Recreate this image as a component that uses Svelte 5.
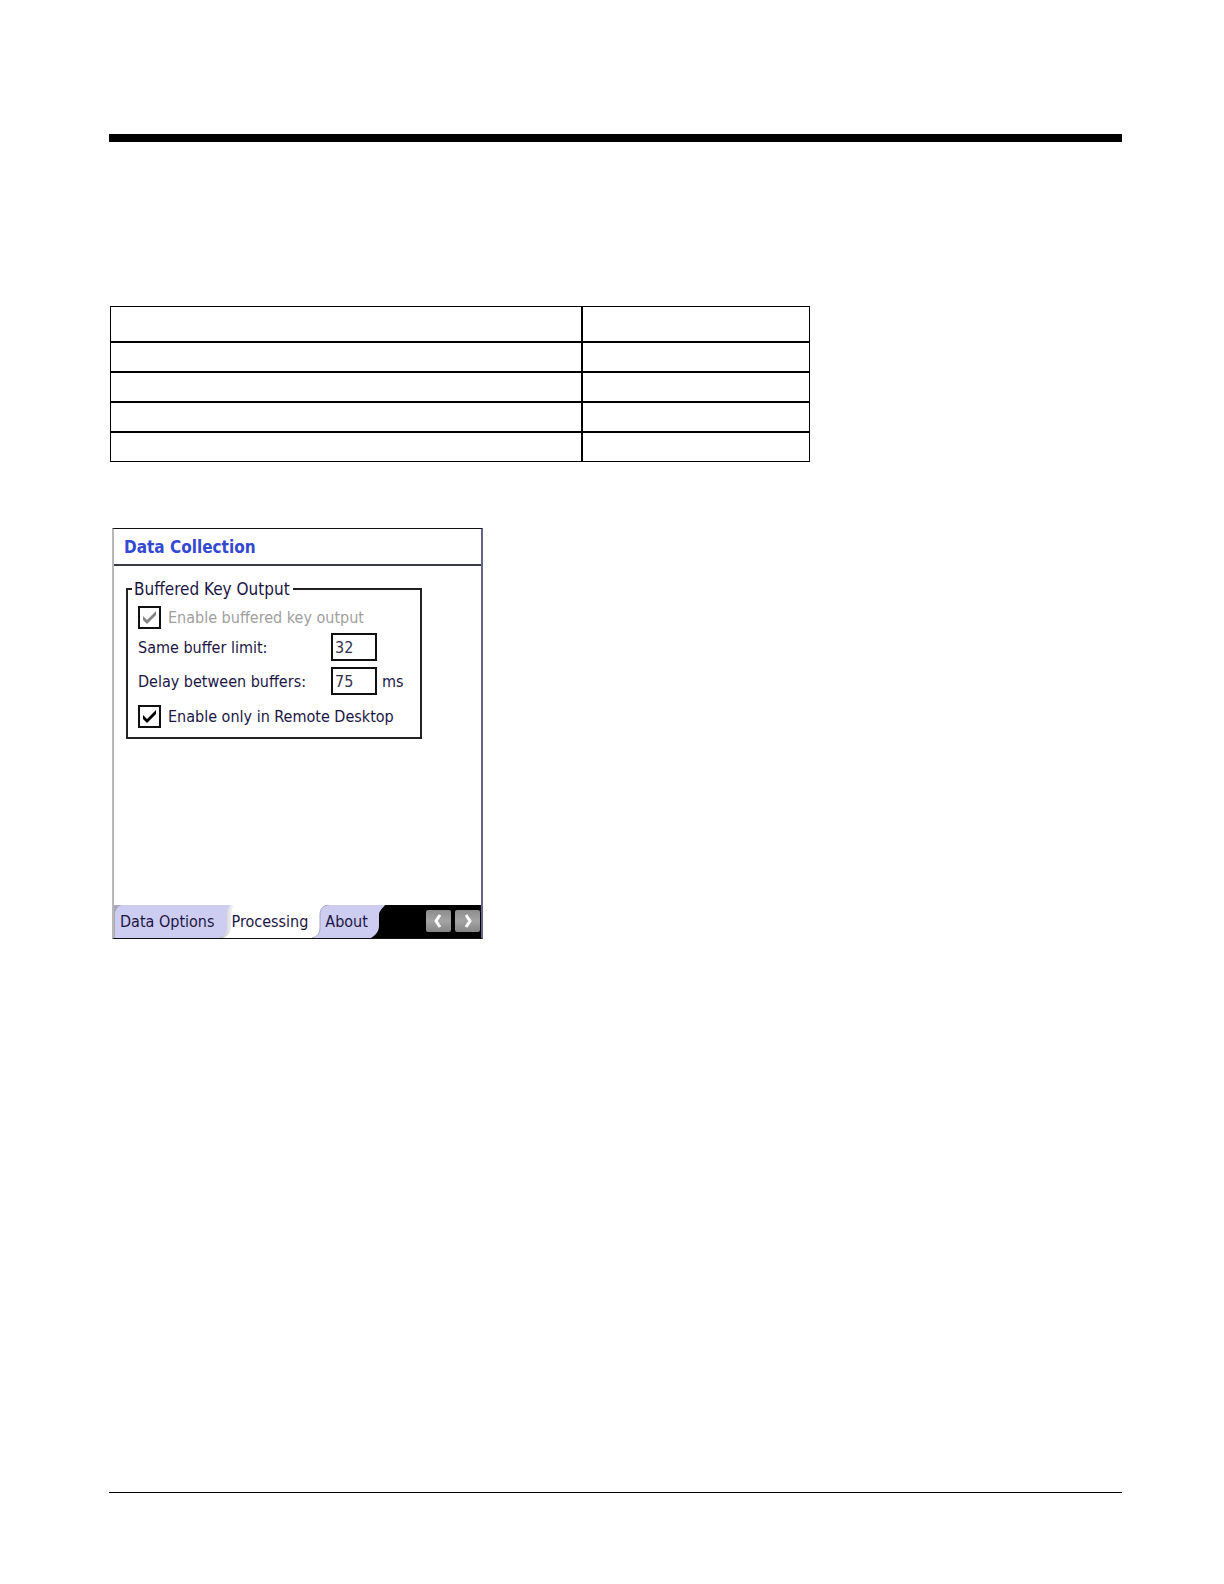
<script lang="ts">
    let bufferLimit = '32';
    let bufferDelay = '75';
    let enableOutput = true;
    let remoteOnly = true;
    let activeTab = 'Processing';

    const tabs = ['Data Options', 'Processing', 'About'];
    const rows = [0, 1, 2, 3];

    function step(direction) {
        const next = tabs.indexOf(activeTab) + direction;
        if (next >= 0 && next < tabs.length) {
            activeTab = tabs[next];
        }
    }
</script>

<div class="page">
    <div class="top-rule"></div>

    <table>
        <thead>
            <tr>
                <th class="wide"></th>
                <th></th>
            </tr>
        </thead>
        <tbody>
            {#each rows as row}
                <tr>
                    <td></td>
                    <td></td>
                </tr>
            {/each}
        </tbody>
    </table>

    <section class="device">
        <h1>Data Collection</h1>
        <div class="panel">
            <fieldset>
                <legend>Buffered Key Output</legend>
                <label class="check disabled">
                    <input type="checkbox" bind:checked={enableOutput} disabled />
                    <svg viewBox="0 0 23 23" aria-hidden="true">
                        <path d="M5 10v4l4 4 9-9V5l-9 9z" />
                    </svg>
                    Enable buffered key output
                </label>
                <div class="fields">
                    <label for="limit">Same buffer limit:</label>
                    <input id="limit" type="text" bind:value={bufferLimit} />
                    <span></span>
                    <label for="delay">Delay between buffers:</label>
                    <input id="delay" type="text" bind:value={bufferDelay} />
                    <span>ms</span>
                </div>
                <label class="check">
                    <input type="checkbox" bind:checked={remoteOnly} />
                    <svg viewBox="0 0 23 23" aria-hidden="true">
                        <path d="M5 10v4l4 4 9-9V5l-9 9z" />
                    </svg>
                    Enable only in Remote Desktop
                </label>
            </fieldset>
        </div>
        <nav class="tab-bar">
            <svg class="tab-shapes" viewBox="0 0 367 33" preserveAspectRatio="none" aria-hidden="true">
                <defs>
                    <linearGradient id="fold" x1="0" x2="1" y1="0" y2="0">
                        <stop offset="0" stop-color="#b4b4bc" />
                        <stop offset="1" stop-color="#fff" />
                    </linearGradient>
                </defs>
                <path fill="#fff" d="M0 0h300v33H0z" />
                <path fill="url(#fold)" d="M112 0h9l-3 4-1 18c0 5-3 9-8 11h-5z" />
                <path fill="#cdcdf1" d="M0 0h117c-3 2-4 5-4 9v13c0 5-4 10-9 11H0z" />
                <path fill="#a9a9bb" d="M0 0h8C4 1 2 4 1 8v25H0z" />
                <path fill="#cdcdf1" d="M198 33c5-1 8-5 8-10V10c0-6 3-10 9-10h60v33z" />
                <path fill="none" stroke="#a6a6bd" d="M198 33c5-1 8-5 8-10V10c0-6 3-10 9-10" />
                <path fill="#000" d="M271 0h96v33H257c5-3 8-7 8-12V10c0-4 3-6 6-10z" />
            </svg>
            {#each tabs as tab}
                <button class="tab" on:click={() => (activeTab = tab)}>{tab}</button>
            {/each}
            <div class="arrows">
                <button class="arrow" aria-label="Previous tab" on:click={() => step(-1)}>
                    <svg viewBox="0 0 25 22" aria-hidden="true">
                        <path d="M14 5l-4 6 4 6" />
                    </svg>
                </button>
                <button class="arrow" aria-label="Next tab" on:click={() => step(1)}>
                    <svg viewBox="0 0 25 22" aria-hidden="true">
                        <path d="M11 5l4 6-4 6" />
                    </svg>
                </button>
            </div>
        </nav>
    </section>

    <footer></footer>
</div>

<style>
    :global(body) {
        background: #fff;
    }

    .page {
        display: flex;
        flex-direction: column;
        align-items: flex-start;
        box-sizing: border-box;
        min-height: 100vh;
        padding: 134px 102px 91px 109px;
        font-family: 'DejaVu Sans Condensed', 'Noto Sans', sans-serif;
        font-size: 16px;
        color: #1b1644;
    }

    .top-rule {
        width: 100%;
        height: 8px;
        background: #000;
    }

    table {
        width: 700px;
        max-width: 100%;
        margin: 164px 0 66px 1px;
        border: none;
        border-spacing: 0;
        table-layout: fixed;
    }

    th,
    td {
        box-sizing: border-box;
        height: 30px;
        padding: 0;
        border: 1px solid #000;
    }

    th {
        height: 36px;
    }

    .wide {
        width: 472px;
    }

    .device {
        box-sizing: border-box;
        width: 371px;
        max-width: 100%;
        margin-left: 3px;
        border: 1px solid #111;
        border-left: 2px solid #b8b8b8;
        border-right: 2px solid #626784;
    }

    h1 {
        margin: 0;
        padding: 1px 0 0 10px;
        border-bottom: 2px solid #3a3c44;
        font-size: 17px;
        line-height: 34px;
        color: #3349d2;
    }

    .panel {
        min-height: 339px;
        box-sizing: border-box;
        padding: 12px 59px 0 12px;
    }

    fieldset {
        margin: 0;
        padding: 6px 10px 9px;
        border: 2px solid #222;
    }

    legend {
        margin-left: -6px;
        padding: 0 3px 0 2px;
        font-size: 17px;
        line-height: 22px;
    }

    .check {
        display: flex;
        align-items: center;
        position: relative;
        gap: 7px;
        line-height: 23px;
        white-space: nowrap;
    }

    .check input {
        appearance: none;
        flex: none;
        box-sizing: border-box;
        width: 23px;
        height: 23px;
        margin: 0;
        border: 2px solid #111;
        background: #fff;
    }

    /* tick sits over its box */
    .check svg {
        position: absolute;
        left: 0;
        top: 0;
        width: 23px;
        height: 23px;
        visibility: hidden;
        fill: #000;
    }

    .check input:checked + svg {
        visibility: visible;
    }

    .disabled {
        color: #a0a0a0;
    }

    .disabled svg {
        fill: #858585;
    }

    .fields {
        display: grid;
        grid-template-columns: 1fr 46px 33px;
        align-items: center;
        row-gap: 6px;
        margin: 4px 0 10px;
        white-space: nowrap;
    }

    .fields input {
        box-sizing: border-box;
        width: 46px;
        height: 28px;
        padding: 0 2px;
        border: 2px solid #111;
        border-radius: 0;
        background: #fff;
        color: #34324f;
        font: inherit;
    }

    .fields span {
        padding-left: 5px;
    }

    .tab-bar {
        display: flex;
        align-items: center;
        position: relative;
        height: 33px;
    }

    .tab-shapes {
        position: absolute;
        inset: 0;
        width: 100%;
        height: 100%;
    }

    .tab,
    .arrow {
        position: relative;
        padding: 0;
        border: none;
        background: none;
        color: inherit;
        font: inherit;
        cursor: pointer;
    }

    .tab {
        margin-left: 6px;
        margin-right: 11px;
        line-height: 35px;
        white-space: nowrap;
    }

    .arrows {
        display: flex;
        gap: 4px;
        margin-left: auto;
        padding: 0 1px 2px 0;
    }

    .arrow {
        width: 25px;
        height: 22px;
        border-radius: 2px;
        background: linear-gradient(#8c8c8c, #a4a4a4 50%, #858585);
    }

    .arrow svg {
        display: block;
        fill: none;
        stroke: #fff;
        stroke-width: 3;
    }

    footer {
        align-self: stretch;
        margin-top: auto;
        border-top: 1px solid #000;
    }
</style>
